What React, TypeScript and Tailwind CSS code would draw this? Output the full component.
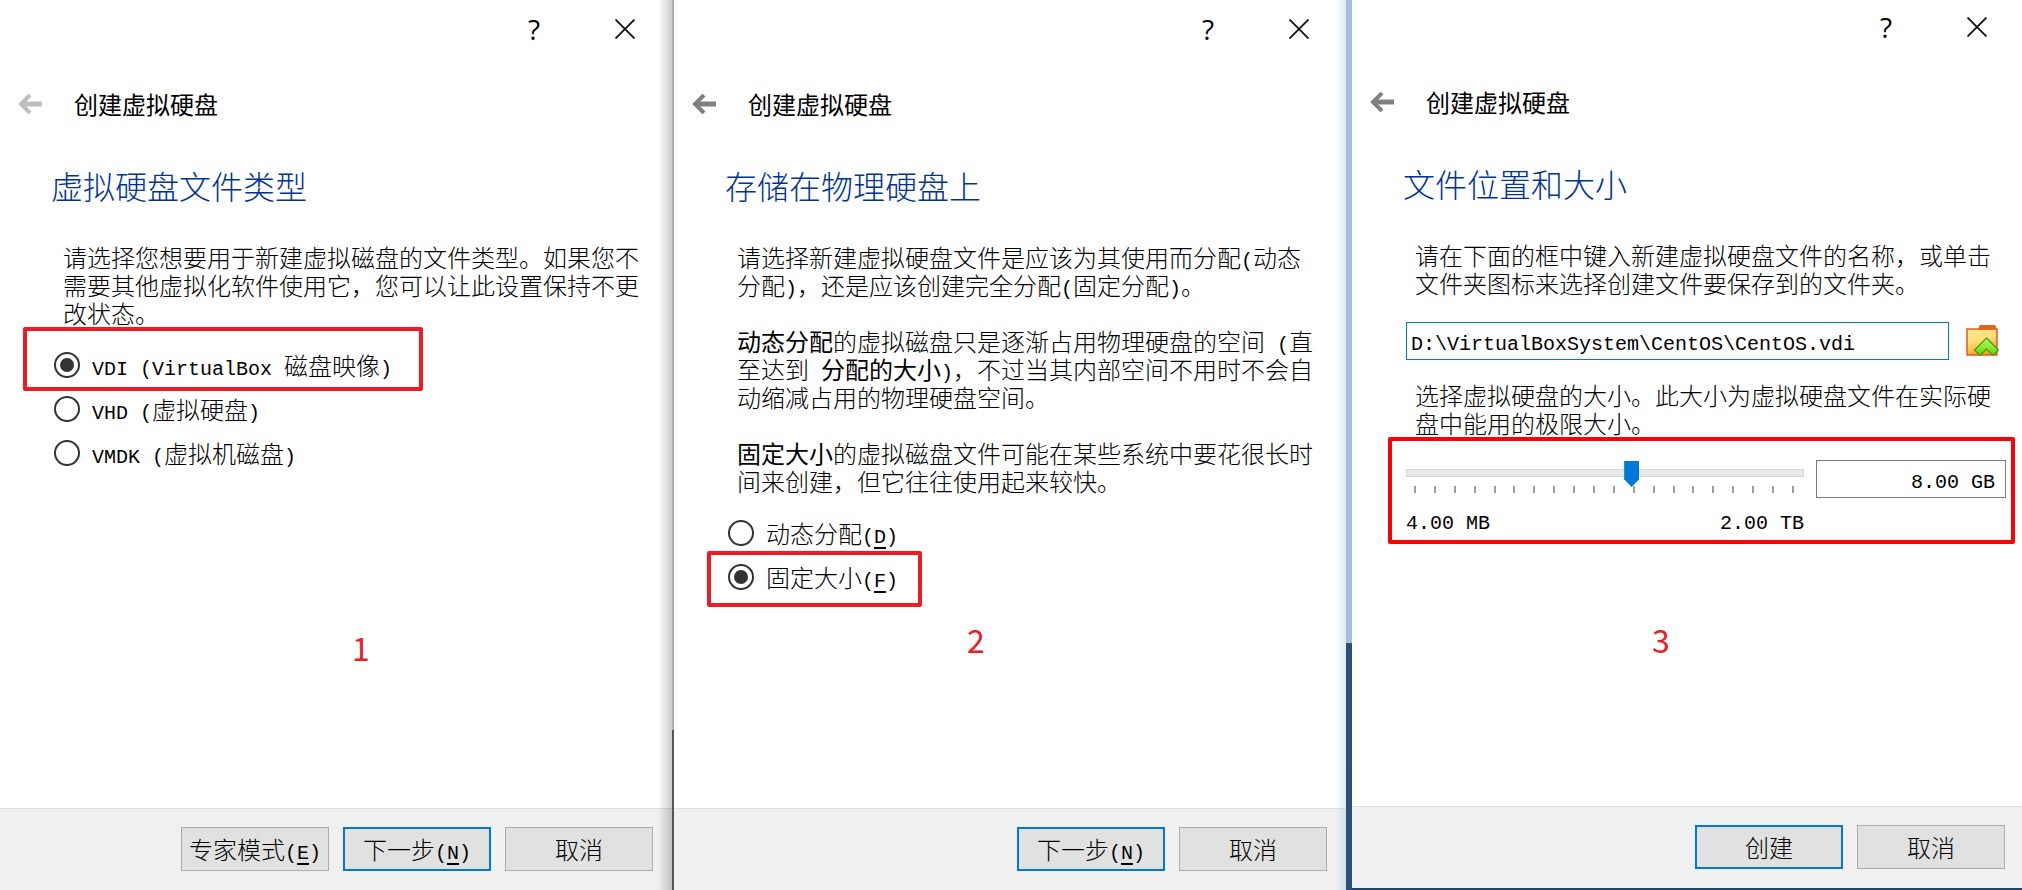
import React, { useState } from "react";

interface DialogProps {
  title: string;
  heading: string;
  backDisabled?: boolean;
  raised?: boolean;
  shade?: string;
  actions: React.ReactNode;
  children: React.ReactNode;
}

interface DialogButtonProps {
  primary?: boolean;
  children: React.ReactNode;
}

interface RadioOptionProps {
  name: string;
  value: string;
  selected: string;
  onSelect: (value: string) => void;
  marker?: string;
  children: React.ReactNode;
}

// half-width characters, two of them take the room of one hanzi
const Half = ({ children }: { children: React.ReactNode }) => (
  <span className="font-['Liberation_Mono',monospace] text-[20px] leading-4 whitespace-pre">
    {children}
  </span>
);

const Key = ({ letter }: { letter: string }) => (
  <Half>
    (<span className="underline underline-offset-4">{letter}</span>)
  </Half>
);

const DialogButton: React.FC<DialogButtonProps> = ({ primary, children }) => (
  <button
    type="button"
    className={
      primary
        ? "h-11 w-[148px] whitespace-nowrap border-2 border-[#0078d7] bg-[#e1e1e1] leading-7 font-light"
        : "h-11 w-[148px] whitespace-nowrap border border-[#adadad] bg-[#e1e1e1] leading-7 font-light"
    }
  >
    {children}
  </button>
);

const RadioOption: React.FC<RadioOptionProps> = ({
  name,
  value,
  selected,
  onSelect,
  marker,
  children,
}) => (
  <label className="relative flex h-11 items-center gap-3">
    <input
      type="radio"
      name={name}
      value={value}
      checked={selected === value}
      onChange={() => onSelect(value)}
      className="grid size-[26px] shrink-0 appearance-none place-items-center rounded-full border-2 border-[#333] bg-white before:size-3.5 before:rounded-full checked:before:bg-[#333]"
    />
    <span>{children}</span>
    {marker && <span className={marker} />}
  </label>
);

const Dialog: React.FC<DialogProps> = ({
  title,
  heading,
  backDisabled,
  raised,
  shade,
  actions,
  children,
}) => (
  <section
    className={
      raised
        ? "relative flex min-w-0 flex-col overflow-hidden border-b-2 border-[#1f4571] bg-white"
        : "relative flex min-w-0 flex-col overflow-hidden bg-white"
    }
  >
    <div
      className={
        raised
          ? "flex h-[54px] items-center justify-end gap-[75px] pr-[35px]"
          : "flex h-14 items-center justify-end gap-[75px] pt-0.5 pr-[37px]"
      }
    >
      <button
        type="button"
        aria-label="帮助"
        className="w-3 font-['Open_Sans',sans-serif] text-[28px] leading-7"
      >
        ?
      </button>
      <button type="button" aria-label="关闭">
        <svg width="20" height="20" viewBox="0 0 20 20" fill="none">
          <path d="M0.5 0.5L19.5 19.5M19.5 0.5L0.5 19.5" stroke="#111" strokeWidth="1.8" />
        </svg>
      </button>
    </div>
    <div className="mt-8 flex h-8 items-center gap-8 pl-[18px]">
      <button type="button" aria-label="返回" disabled={backDisabled}>
        <svg
          width="24"
          height="20"
          viewBox="0 0 24 20"
          fill="none"
          stroke={backDisabled ? "#bfbfbf" : "#808080"}
        >
          <path d="M24 10H3" strokeWidth="5" />
          <path d="M12 1L3 10L12 19" strokeWidth="4" />
        </svg>
      </button>
      <span className="text-2xl leading-8">{title}</span>
    </div>
    <h1 className="mt-[45px] pl-[51px] text-[32px] leading-10 font-light text-[#003399]">
      {heading}
    </h1>
    <div className="flex-1 pt-[38px]">{children}</div>
    <footer
      className={
        raised
          ? "flex justify-end gap-3.5 border-t border-[#dfdfdf] bg-[#f0f0f0] pt-[18px] pr-[17px] pb-[19px]"
          : "flex justify-end gap-3.5 border-t border-[#dfdfdf] bg-[#f0f0f0] pt-[18px] pr-[19px] pb-[19px]"
      }
    >
      {actions}
    </footer>
    {shade && <div className={shade} />}
  </section>
);

const FolderIcon = () => (
  <svg width="34" height="34" viewBox="0 0 34 34">
    <defs>
      <linearGradient id="folder" x1="0" y1="0" x2="0.3" y2="1">
        <stop offset="0" stopColor="#ffe98a" />
        <stop offset="0.5" stopColor="#ffe07a" />
        <stop offset="1" stopColor="#ff9f1f" />
      </linearGradient>
      <linearGradient id="arrow" x1="0" y1="0" x2="0" y2="1">
        <stop offset="0" stopColor="#b4ff6a" />
        <stop offset="1" stopColor="#5fd400" />
      </linearGradient>
    </defs>
    <path d="M12 6L14 1H29L31 6V31H12Z" fill="#e8601c" />
    <rect x="1" y="5" width="30" height="26" fill="url(#folder)" stroke="#d9541e" strokeWidth="1.4" />
    <path d="M12 6L14 1H29L31 6V9H30V5.500H12Z" fill="#e8601c" />
    <path
      d="M20.500 14L32.500 26L27 31.500L20.500 25L14 31.500L8.500 26Z"
      fill="url(#arrow)"
      stroke="#3f9a1c"
      strokeWidth="1.2"
    />
  </svg>
);

const FileTypeDialog = () => {
  const [type, setType] = useState("vdi");

  return (
    <Dialog
      title="创建虚拟硬盘"
      heading="虚拟硬盘文件类型"
      backDisabled
      shade="pointer-events-none absolute inset-y-0 right-0 w-3.5 bg-linear-to-r from-transparent to-black/20"
      actions={
        <>
          <DialogButton>
            专家模式
            <Key letter="E" />
          </DialogButton>
          <DialogButton primary>
            下一步
            <Key letter="N" />
          </DialogButton>
          <DialogButton>取消</DialogButton>
        </>
      }
    >
      <p className="mr-[33px] ml-[63px] font-light">
        请选择您想要用于新建虚拟磁盘的文件类型。如果您不需要其他虚拟化软件使用它，您可以让此设置保持不更改状态。
      </p>
      <div className="mt-4 pl-[54px] font-light">
        <RadioOption
          name="type"
          value="vdi"
          selected={type}
          onSelect={setType}
          marker="absolute -top-4 -left-[31px] h-16 w-[400px] rounded-xs border-4 border-[#ed1c24]"
        >
          <Half>VDI (VirtualBox </Half>磁盘映像<Half>)</Half>
        </RadioOption>
        <RadioOption name="type" value="vhd" selected={type} onSelect={setType}>
          <Half>VHD (</Half>虚拟硬盘<Half>)</Half>
        </RadioOption>
        <RadioOption name="type" value="vmdk" selected={type} onSelect={setType}>
          <Half>VMDK (</Half>虚拟机磁盘<Half>)</Half>
        </RadioOption>
      </div>
      <div className="mt-[152px] pl-[352px] text-[32px] leading-10 text-[#ed1c24]">1</div>
    </Dialog>
  );
};

const StorageDialog = () => {
  const [storage, setStorage] = useState("fixed");

  return (
    <Dialog
      title="创建虚拟硬盘"
      heading="存储在物理硬盘上"
      shade="pointer-events-none absolute inset-y-0 right-0 w-2.5 bg-linear-to-r from-transparent to-[#a6c8f0]/40"
      actions={
        <>
          <DialogButton primary>
            下一步
            <Key letter="N" />
          </DialogButton>
          <DialogButton>取消</DialogButton>
        </>
      }
    >
      <div className="mr-[30px] ml-[63px] flex flex-col gap-7 font-light">
        <p>
          请选择新建虚拟硬盘文件是应该为其使用而分配<Half>(</Half>动态分配<Half>)</Half>
          ，还是应该创建完全分配<Half>(</Half>固定分配<Half>)</Half>。
        </p>
        <p>
          <b>动态分配</b>的虚拟磁盘只是逐渐占用物理硬盘的空间<Half> (</Half>直至达到
          <Half> </Half>
          <b>分配的大小</b>
          <Half>)</Half>，不过当其内部空间不用时不会自动缩减占用的物理硬盘空间。
        </p>
        <p>
          <b>固定大小</b>的虚拟磁盘文件可能在某些系统中要花很长时间来创建，但它往往使用起来较快。
        </p>
      </div>
      <div className="mt-4 pl-[54px] font-light">
        <RadioOption name="storage" value="dynamic" selected={storage} onSelect={setStorage}>
          动态分配
          <Key letter="D" />
        </RadioOption>
        <RadioOption
          name="storage"
          value="fixed"
          selected={storage}
          onSelect={setStorage}
          marker="absolute -top-1 -left-[21px] h-14 w-[215px] rounded-xs border-4 border-[#ed1c24]"
        >
          固定大小
          <Key letter="F" />
        </RadioOption>
      </div>
      <div className="mt-5 pl-[293px] text-[32px] leading-10 text-[#ed1c24]">2</div>
    </Dialog>
  );
};

const LocationDialog = () => {
  const [path, setPath] = useState("D:\\VirtualBoxSystem\\CentOS\\CentOS.vdi");
  const [size, setSize] = useState("8.00 GB");
  const [position, setPosition] = useState(570);

  return (
    <Dialog
      title="创建虚拟硬盘"
      heading="文件位置和大小"
      raised
      actions={
        <>
          <DialogButton primary>创建</DialogButton>
          <DialogButton>取消</DialogButton>
        </>
      }
    >
      <p className="mr-[31px] ml-[63px] font-light">
        请在下面的框中键入新建虚拟硬盘文件的名称，或单击文件夹图标来选择创建文件要保存到的文件夹。
      </p>
      <div className="mt-[25px] mr-[22px] ml-[54px] flex items-center gap-[17px]">
        <input
          type="text"
          aria-label="文件位置"
          value={path}
          onChange={(e) => setPath(e.target.value)}
          className="h-[38px] min-w-0 flex-1 border border-[#0078d7] px-1 pt-1.5 font-['Liberation_Mono',monospace] text-[20px]"
        />
        <button type="button" aria-label="选择文件夹">
          <FolderIcon />
        </button>
      </div>
      <p className="mt-[21px] mr-[31px] ml-[63px] font-light">
        选择虚拟硬盘的大小。此大小为虚拟硬盘文件在实际硬盘中能用的极限大小。
      </p>
      <div className="mr-[7px] ml-9 flex gap-3 rounded-xs border-4 border-[#ff0000] pt-[19px] pr-[5px] pb-2 pl-3.5">
        <div className="min-w-0 flex-1">
          <input
            type="range"
            aria-label="虚拟硬盘大小"
            min={0}
            max={1000}
            value={position}
            onChange={(e) => setPosition(Number(e.target.value))}
            className="block h-[26px] w-full appearance-none bg-transparent [&::-webkit-slider-runnable-track]:h-2 [&::-webkit-slider-runnable-track]:border [&::-webkit-slider-runnable-track]:border-[#d6d6d6] [&::-webkit-slider-runnable-track]:bg-[#e7eaea] [&::-webkit-slider-thumb]:-mt-[9px] [&::-webkit-slider-thumb]:h-[26px] [&::-webkit-slider-thumb]:w-[15px] [&::-webkit-slider-thumb]:appearance-none [&::-webkit-slider-thumb]:bg-[#0078d7] [&::-webkit-slider-thumb]:[clip-path:polygon(0_0,100%_0,100%_70%,50%_100%,0_70%)]"
          />
          <div className="flex justify-between pr-2.5 pl-2">
            {Array.from({ length: 20 }, (_, i) => (
              <span key={i} className="h-[7px] w-0.5 bg-[#a0a090]" />
            ))}
          </div>
          <div className="mt-[23px] flex justify-between">
            <Half>4.00 MB</Half>
            <Half>2.00 TB</Half>
          </div>
        </div>
        <input
          type="text"
          aria-label="大小"
          value={size}
          onChange={(e) => setSize(e.target.value)}
          className="h-[38px] w-[190px] border border-[#7a7a7a] px-2.5 pt-1.5 text-right font-['Liberation_Mono',monospace] text-[20px]"
        />
      </div>
      <div className="mt-[75px] pl-[300px] text-[32px] leading-10 text-[#ed1c24]">3</div>
    </Dialog>
  );
};

export default function App() {
  return (
    <main className="grid min-h-screen grid-cols-[672fr_2px_672fr_6px_670fr] bg-white font-['Noto_Sans_CJK_SC',sans-serif] text-2xl leading-7 text-black">
      <FileTypeDialog />
      <div className="flex flex-col">
        <div className="h-[730px] bg-[#b0b0b0]" />
        <div className="flex-1 bg-[#555]" />
      </div>
      <StorageDialog />
      <div className="flex flex-col">
        <div className="h-[643px] bg-linear-to-r from-[#a9bdd8] to-[#a0c2ec]" />
        <div className="flex-1 bg-[#2f4f76]" />
      </div>
      <LocationDialog />
    </main>
  );
}
